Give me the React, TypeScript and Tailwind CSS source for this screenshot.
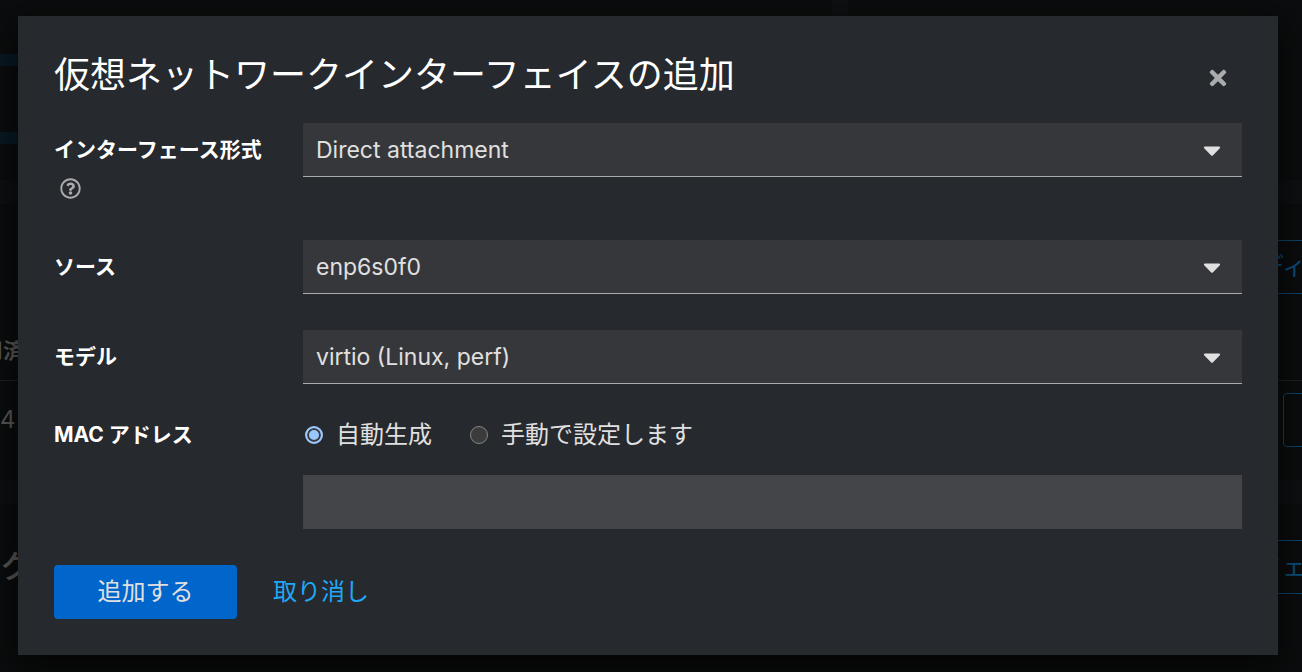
import { useState } from "react";
import type { ReactNode } from "react";
import { FaCaretDown, FaRegQuestionCircle, FaTimes } from "react-icons/fa";

function Field({ label, htmlFor, help, children }: { label: string; htmlFor: string; help?: boolean; children: ReactNode }) {
  return (
    <div className="flex gap-9">
      <div className="w-[213px] shrink-0 pt-[9px]">
        <label htmlFor={htmlFor} className="block text-[21px] leading-9 font-bold whitespace-nowrap text-white">
          {label}
        </label>
        {help && (
          <button type="button" aria-label="ヘルプ" className="flex h-9 items-center px-1.5 pt-1 text-[#aaabac]">
            <FaRegQuestionCircle size={21} />
          </button>
        )}
      </div>
      <div className="min-w-0 grow">{children}</div>
    </div>
  );
}

function SelectBox({ id, options }: { id: string; options: string[] }) {
  return (
    <div className="relative">
      <select
        id={id}
        className="block h-[54px] w-full appearance-none border-b border-[#aaabac] bg-[#36373a] px-[13px] pt-0.5 text-[23px] text-[#e0e0e0] outline-none"
      >
        {options.map((o) => (
          <option key={o}>{o}</option>
        ))}
      </select>
      <FaCaretDown size={28} className="pointer-events-none absolute top-[13px] right-4 text-[#e0e0e0]" />
    </div>
  );
}

function Radio({ label, checked, onChange }: { label: string; checked: boolean; onChange: () => void }) {
  return (
    <label className="flex items-center gap-[13px] text-2xl leading-[30px] text-[#e0e0e0]">
      <input
        type="radio"
        name="mac"
        checked={checked}
        onChange={onChange}
        className="size-[18px] appearance-none rounded-full border border-[#858585] bg-[#3b3b3b] checked:border-2 checked:border-[#99c8ff] checked:bg-[#99c8ff] checked:shadow-[inset_0_0_0_2px_#3b3b3b]"
      />
      {label}
    </label>
  );
}

function Backdrop() {
  return (
    <div aria-hidden="true" className="absolute inset-0 flex flex-col gap-6 overflow-hidden bg-[#0f1112] text-[#616161]">
      <div className="flex h-[180px] shrink-0 gap-4">
        <div className="flex w-[832px] shrink-0 flex-col gap-[66px] bg-[#0c0d0e] pt-[54px]">
          <div className="h-3 w-96 bg-[#0a1b27]" />
          <div className="h-3 w-96 bg-[#0a1b27]" />
        </div>
        <div className="grow bg-[#0c0d0e]" />
      </div>
      <div className="h-[276px] shrink-0 bg-[#0c0d0e] pt-9">
        <div className="-mr-1 ml-auto flex h-[54px] w-60 items-center justify-end border-y border-[#0d4a75] text-2xl text-[#0d5788]">ディ</div>
        <div className="flex h-[87px] items-end border-b border-[#222324] pb-3.5 text-[21px] font-bold">
          <span className="-ml-[18px]">用済</span>
        </div>
        <div className="flex items-center justify-between pt-3 text-2xl">
          <span>4</span>
          <span className="-mr-2 h-[54px] w-[27px] rounded border border-[#0d4a75]" />
        </div>
      </div>
      <div className="flex grow items-start justify-between bg-[#0c0d0e] pt-9">
        <span className="text-[32px] leading-[54px] font-medium">ク</span>
        <span className="-mr-1 flex h-[54px] w-60 items-center justify-end border-y border-[#0d4a75] text-2xl text-[#0d5788]">フェ</span>
      </div>
    </div>
  );
}

export default function App() {
  const [auto, setAuto] = useState(true);
  return (
    <div className="relative min-h-screen bg-[#0c0d0e] py-4 pr-6 pl-[18px] font-['Inter','Noto_Sans_CJK_JP',sans-serif]">
      <Backdrop />
      <form
        role="dialog"
        aria-labelledby="dialog-title"
        onSubmit={(e) => e.preventDefault()}
        className="relative bg-[#26292d] p-9 shadow-[0_12px_36px_8px_rgba(0,0,0,0.6)]"
      >
        <header className="mb-6 flex items-center justify-between">
          <h1 id="dialog-title" className="text-4xl leading-[47px] text-white">仮想ネットワークインターフェイスの追加</h1>
          <button type="button" aria-label="閉じる" className="mr-3 pt-1 text-[#aaabac]">
            <FaTimes size={24} />
          </button>
        </header>
        <div className="flex flex-col gap-9">
          <Field label="インターフェース形式" htmlFor="type" help>
            <SelectBox id="type" options={["Direct attachment"]} />
          </Field>
          <Field label="ソース" htmlFor="source">
            <SelectBox id="source" options={["enp6s0f0"]} />
          </Field>
          <Field label="モデル" htmlFor="model">
            <SelectBox id="model" options={["virtio (Linux, perf)"]} />
          </Field>
          <div className="flex gap-9">
            <label htmlFor="mac-address" className="block w-[213px] shrink-0 text-[21px] leading-[30px] font-bold text-white">
              MAC アドレス
            </label>
            <div className="flex min-w-0 grow flex-col gap-[25px]">
              <div className="flex gap-[38px] pl-0.5">
                <Radio label="自動生成" checked={auto} onChange={() => setAuto(true)} />
                <Radio label="手動で設定します" checked={!auto} onChange={() => setAuto(false)} />
              </div>
              <input
                id="mac-address"
                type="text"
                disabled={auto}
                className="block h-[54px] w-full bg-[#444548] px-3 text-2xl text-[#e0e0e0] outline-none"
              />
            </div>
          </div>
        </div>
        <footer className="mt-9 flex gap-9">
          <button type="submit" className="h-[54px] w-[183px] rounded bg-[#0066cc] text-2xl text-[#e0e0e0]">追加する</button>
          <button type="button" className="h-[54px] text-2xl text-[#1fa7f8]">取り消し</button>
        </footer>
      </form>
    </div>
  );
}
